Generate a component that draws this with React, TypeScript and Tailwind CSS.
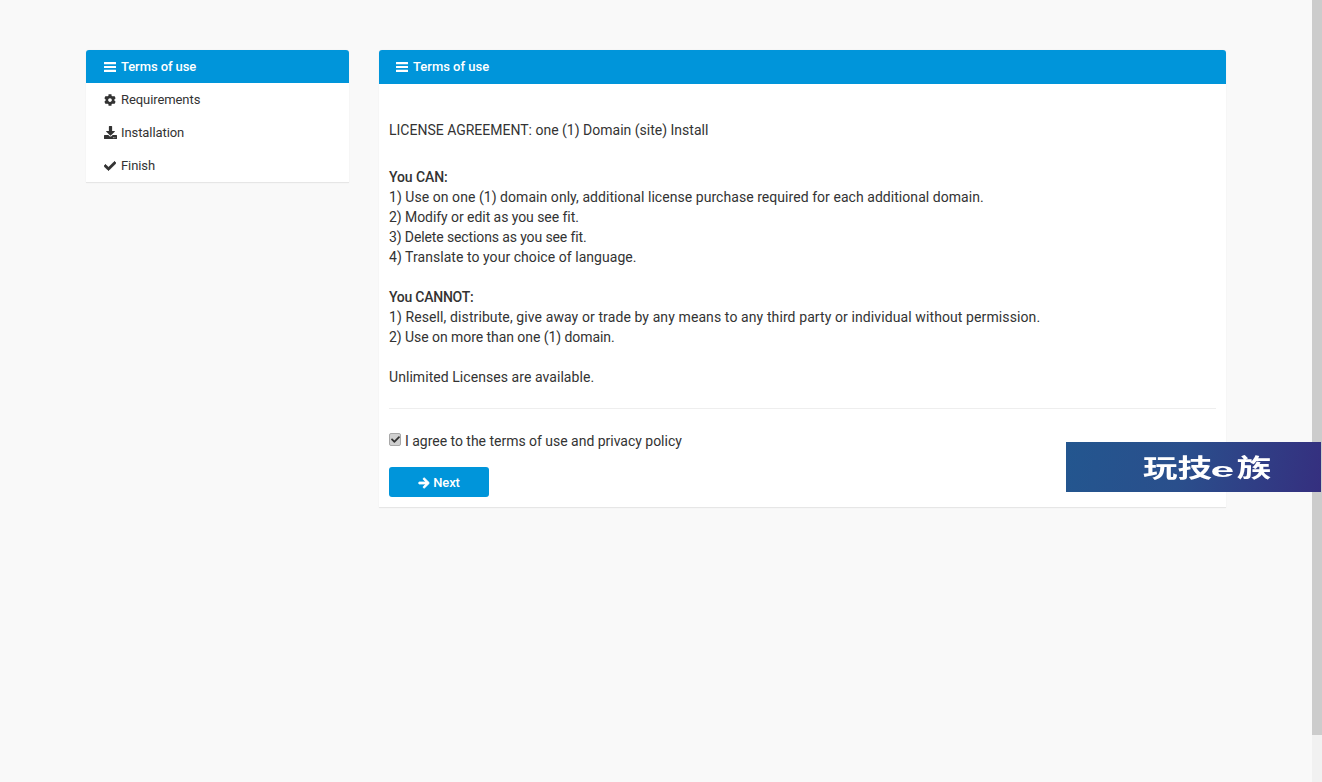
import React from "react";
import { FaCog, FaDownload, FaCheck, FaArrowRight } from "react-icons/fa";

function Bars() {
  return (
    <span className="w-[14px] mr-[4px] flex justify-center">
      <svg width="12" height="10" viewBox="0 0 12 10" fill="currentColor" aria-hidden="true">
        <rect x="0" y="0" width="12" height="2.2" rx="0.3" />
        <rect x="0" y="3.9" width="12" height="2.2" rx="0.3" />
        <rect x="0" y="7.8" width="12" height="2.2" rx="0.3" />
      </svg>
    </span>
  );
}

function NavItem({ icon, label }: { icon: React.ReactNode; label: string }) {
  return (
    <div className="h-[33px] flex items-center pl-[17px] text-[13px] tracking-[-0.08px] text-[#333]">
      <span className="w-[14px] flex justify-center mr-[4px]">{icon}</span>
      <span>{label}</span>
    </div>
  );
}

export default function App() {
  return (
    <div className="relative h-[782px] overflow-hidden flex bg-[#f9f9f9] font-['Roboto',sans-serif] text-[#333]">
      <main className="flex-1 min-w-0 pt-[50px] pl-[86px] flex items-start gap-[30px]">
        <aside className="w-[263px] shrink-0 bg-white rounded-t-[3px] border-b border-[#e6e6e6] shadow-[0_0_1px_rgba(0,0,0,0.12)] overflow-hidden">
          <div className="h-[33px] flex items-center pl-[17px] bg-[#0095da] text-white text-[13px] font-medium tracking-[-0.08px]">
            <Bars />
            <span>Terms of use</span>
          </div>
          <NavItem icon={<FaCog className="w-[12px] h-[12px]" />} label="Requirements" />
          <NavItem icon={<FaDownload className="w-[13px] h-[13px]" />} label="Installation" />
          <NavItem icon={<FaCheck className="w-[12px] h-[12px] stroke-[30px]" />} label="Finish" />
        </aside>
        <section className="w-[847px] shrink-0 bg-white rounded-t-[3px] border-b border-[#e6e6e6] shadow-[0_0_1px_rgba(0,0,0,0.12)] overflow-hidden">
          <div className="h-[34px] flex items-center pl-[16px] bg-[#0095da] text-white text-[13px] font-medium">
            <Bars />
            <span>Terms of use</span>
          </div>
          <div className="px-[10px] pt-[36px] pb-[10px] text-[14px] leading-[20px] text-[#333]">
            <p>LICENSE AGREEMENT: one (1) Domain (site) Install</p>
            <p className="mt-[27px] font-medium tracking-[-0.1px]">You CAN:</p>
            <p className="tracking-[0.05px]">1) Use on one (1) domain only, additional license purchase required for each additional domain.</p>
            <p className="tracking-[-0.06px]">2) Modify or edit as you see fit.</p>
            <p className="tracking-[-0.12px]">3) Delete sections as you see fit.</p>
            <p className="tracking-[0.05px]">4) Translate to your choice of language.</p>
            <p className="mt-[20px] font-medium tracking-[-0.25px]">You CANNOT:</p>
            <p className="tracking-[0.1px]">1) Resell, distribute, give away or trade by any means to any third party or individual without permission.</p>
            <p className="tracking-[-0.06px]">2) Use on more than one (1) domain.</p>
            <p className="mt-[20px] tracking-[0.06px]">Unlimited Licenses are available.</p>
            <hr className="mt-[21px] border-t border-[#eeeeee]" />
            <label className="mt-[22px] flex items-center h-[20px]">
              <span className="relative w-[12px] h-[13px] mr-[4px] mb-[3px] flex items-center justify-center">
                <input type="checkbox" defaultChecked className="appearance-none absolute inset-0 rounded-[2px] bg-[#d0d0d0] border border-[#a8a8a8]" />
                <FaCheck className="relative w-[9px] h-[9px] text-[#333] pointer-events-none" />
              </span>
              <span className="tracking-[-0.02px]">I agree to the terms of use and privacy policy</span>
            </label>
            <button className="mt-[16px] w-[100px] h-[30px] pt-[1px] flex items-center justify-center rounded-[3px] bg-[#0095da] text-white text-[13px] font-medium">
              <FaArrowRight className="w-[12px] h-[12px] mr-[3px] stroke-[40px]" />
              <span className="tracking-[-0.1px]">Next</span>
            </button>
          </div>
        </section>
      </main>
      <div className="w-[10px] shrink-0 h-full bg-[#f1f1f1] flex flex-col">
        <div className="h-[735px] bg-[#cccccc]" />
      </div>
      <div className="absolute left-[1066px] top-[442px] w-[255px] h-[50px] pl-[77px] flex items-center bg-[linear-gradient(100deg,#23568f_0%,#2a4f8c_45%,#352f7f_100%)]">
        <div className="origin-left scale-x-[1.38] blur-[0.4px] whitespace-nowrap text-white text-[25px] font-bold leading-none font-['Noto_Sans_CJK_SC',sans-serif]">
          玩技<span className="inline-block w-[15px] text-center scale-x-[1.55] text-[20px] font-['Liberation_Sans',sans-serif]">e</span><span className="ml-[3px]">族</span>
        </div>
      </div>
    </div>
  );
}
